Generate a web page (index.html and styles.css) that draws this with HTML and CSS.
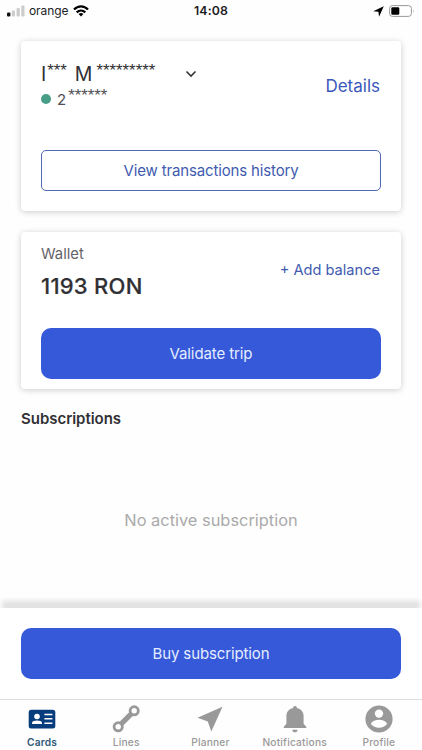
FILE: index.html
```html
<!DOCTYPE html>
<html lang="en">
<head>
<meta charset="utf-8">
<meta name="viewport" content="width=device-width, initial-scale=1">
<title>Cards</title>
<link rel="stylesheet" href="styles.css">
</head>
<body>
<div class="app">
  <header class="status">
    <div class="carrier">
      <svg class="signal" width="18" height="12" viewBox="0 0 18 12"><rect x="0" y="7.5" width="3.4" height="4" rx="1" fill="#111"/><g fill="#ccc"><rect x="4.8" y="5.5" width="3.2" height="6" rx="1"/><rect x="9.6" y="3" width="3.2" height="8.5" rx="1"/><rect x="14.3" y="0.5" width="3.2" height="11" rx="1"/></g></svg>
      <span class="operator">orange</span>
      <svg width="16" height="12" viewBox="0 0 16 12"><g fill="none" stroke="#000" stroke-width="2.2"><path d="M1 4.6C5 .3 11 .3 15 4.6"/><path d="M3.7 7.4C6.2 4.9 9.8 4.9 12.3 7.4"/></g><path d="M5.6 9C7 7.7 9 7.7 10.4 9L8 11.5Z"/></svg>
    </div>
    <time class="clock">14:08</time>
    <div class="power">
      <svg width="10" height="10" viewBox="0 0 10 10"><path d="M9.8.2L5.5 9.8L4.9 5.3L.2 4.7Z"/></svg>
      <svg width="26" height="12" viewBox="0 0 26 12"><rect x=".6" y=".6" width="21.8" height="10.8" rx="2.8" fill="none" stroke="#999" stroke-width="1"/><rect x="2.3" y="2.3" width="8" height="7.4" rx="1.3"/><path d="M24 4.2q1.2 1.8 0 3.6z" fill="#999"/></svg>
    </div>
  </header>

  <main class="content">
    <section class="card account">
      <div class="account-top">
        <div class="owner">
          <div class="name"><span>I</span><span class="mask">***</span><span class="surname">M</span><span class="mask mask-long">*********</span>
            <svg class="chevron" width="12" height="8" viewBox="0 0 12 8"><path d="M1.5 1.5L6 6L10.5 1.5" fill="none" stroke="#333" stroke-width="1.6"/></svg>
          </div>
          <div class="number"><i class="dot"></i><span>2</span><span class="mask">******</span></div>
        </div>
        <a class="details">Details</a>
      </div>
      <button class="btn outline"><span class="history">View transactions history</span></button>
    </section>

    <section class="card wallet">
      <div class="wallet-top">
        <div>
          <div class="label">Wallet</div>
          <div class="amount">1193 RON</div>
        </div>
        <a class="add">+ Add balance</a>
      </div>
      <button class="btn solid"><span class="validate">Validate trip</span></button>
    </section>

    <h2 class="heading">Subscriptions</h2>
    <p class="empty">No active subscription</p>
  </main>

  <div class="shade"></div>
  <div class="buy"><button class="btn solid"><span class="purchase">Buy subscription</span></button></div>

  <nav class="tabs">
    <a class="tab active">
      <svg width="28" height="28" viewBox="0 0 28 28"><rect x=".7" y="4.8" width="26.6" height="18.6" rx="2.5" fill="#073d7c"/><g fill="#fff"><circle cx="9" cy="11.5" r="2.8"/><path d="M4 19v-1.2c0-3.2 10-3.2 10 0V19z"/><path d="M16.4 8.7h8v1.5h-8zM16.4 13h8v1.5h-8zM16.4 17.5h8V19h-8z"/></g></svg>
      <span>Cards</span>
    </a>
    <a class="tab lines">
      <svg width="28" height="28" viewBox="0 0 28 28"><g fill="none" stroke="#999" stroke-width="2.8"><circle cx="6.2" cy="21.8" r="4.1"/><circle cx="22.2" cy="5.8" r="4.1"/></g><path d="M9.2 18.8L19.2 8.8" stroke="#999" stroke-width="5.2"/></svg>
      <span>Lines</span>
    </a>
    <a class="tab planner">
      <svg width="28" height="28" viewBox="0 0 28 28"><path d="M26.5 1.7L15.3 26.5L11.8 16.6L1.5 12.8Z" fill="#999"/></svg>
      <span>Planner</span>
    </a>
    <a class="tab notifications">
      <svg width="28" height="28" viewBox="0 0 28 28"><path d="M12.2 2.2a1.9 1.9 0 0 1 3.6 0v.9c4.6.9 6.8 4.1 6.8 8v7.7l2.7 3V23H2.8v-1.2l2.6-3v-7.7c0-3.9 2.2-7.1 6.8-8zM11.3 24.7h5.2c0 3.5-5.2 3.5-5.2 0z" fill="#999"/></svg>
      <span>Notifications</span>
    </a>
    <a class="tab profile">
      <svg width="28" height="28" viewBox="0 0 28 28"><circle cx="14" cy="14" r="13.6" fill="#999"/><circle cx="14" cy="8.6" r="4.2" fill="#fff"/><path d="M5.8 18.7c2.7-5.4 13.7-5.4 16.4 0c-3.8 5.4-12.6 5.4-16.4 0z" fill="#fff"/></svg>
      <span>Profile</span>
    </a>
  </nav>
</div>
</body>
</html>
```
FILE: styles.css
```css
* { box-sizing: border-box; }
body { margin: 0; background: #fefefe; font-family: Inter, "Liberation Sans", sans-serif; color: #303034; }
svg { display: block; flex: none; }
.app { width: 422px; height: 750px; display: flex; flex-direction: column; overflow: hidden; }
.status { height: 22px; flex: none; display: grid; grid-template-columns: 1fr auto 1fr; align-items: center; padding: 0 7px; color: #1c1c1e; }
.carrier { display: flex; align-items: center; gap: 4px; }
.operator { font-size: 12px; line-height: 18px; width: 40px; white-space: nowrap; letter-spacing: -.1px; }
.clock { font-size: 12.3px; line-height: 18px; font-weight: 600; letter-spacing: .15px; }
.power { display: flex; justify-content: flex-end; align-items: center; gap: 5px; }
.power svg:first-child { width: 11px; height: 11px; }
.content { flex: 1; padding: 19px 21px 0; }
.card { background: #fff; border-radius: 4px; box-shadow: 0 1px 6px rgba(0, 0, 0, .2); padding: 0 20px; }
.account { height: 170px; padding-top: 20px; }
.account-top { display: flex; justify-content: space-between; height: 89px; }
.name { display: flex; align-items: center; height: 26px; font-size: 19.5px; line-height: 26px; }
.name, .number { white-space: nowrap; }
.mask { font: 16.8px/20px "Liberation Sans", sans-serif; margin: 0 0 7px 1px; }
.surname { margin-left: 8px; }
.mask-long { margin-left: 4px; }
.chevron { margin-left: 30px; }
.number { display: flex; align-items: center; height: 25px; font-size: 15px; color: #505055; }
.number .mask { margin-bottom: 7px; margin-left: 2px; }
.dot { width: 10px; height: 10px; border-radius: 50%; background: #479d87; margin: 0 6px 1px 0; }
.details { color: #3a58bb; font-size: 17px; line-height: 24px; margin: 13px 1px 0 0; }
.btn { display: flex; width: 100%; align-items: center; justify-content: center; font-family: inherit; font-size: 15px; padding: 0; white-space: nowrap; }
.history { letter-spacing: -.15px; }
.validate { letter-spacing: -.1px; }
.purchase { letter-spacing: -.12px; }
.outline { height: 41px; border: 1px solid #5269b5; border-radius: 5px; background: #fff; color: #415baf; }
.wallet { height: 157px; margin-top: 21px; padding-top: 11px; }
.wallet-top { display: flex; justify-content: space-between; height: 85px; }
.label { font-size: 14.8px; line-height: 22px; color: #646469; }
.amount { font-size: 22px; line-height: 30px; font-weight: 500; margin-top: 6px; letter-spacing: .25px; -webkit-text-stroke: .2px #303034; }
.add { color: #415baf; font-size: 14.6px; line-height: 22px; margin: 16px 1px 0 0; }
.solid { height: 51px; border: 0; border-radius: 10px; background: #3559d9; color: #e6edff; }
.heading { font-size: 15px; line-height: 22px; font-weight: 600; margin: 19px 0 0; letter-spacing: -.03px; }
.empty { color: #aaa; font-size: 16.4px; line-height: 24px; text-align: center; margin: 78px 0 0; }
.shade { height: 11px; flex: none; background: linear-gradient(#fefefe, #e4e4e4 60%, #e2e2e2); box-shadow: inset 5px 0 4px -3px #fefefe, inset -5px 0 4px -3px #fefefe; }
.buy { flex: none; height: 91px; padding: 20px 21px; background: #fff; }
.tabs { flex: none; height: 51px; border-top: 1px solid #ddd; display: grid; grid-template-columns: repeat(5, 84.2px); }
.tab { display: flex; flex-direction: column; align-items: center; padding-top: 5px; color: #999; font-size: 10.2px; line-height: 16px; font-weight: 500; letter-spacing: .2px; }
.tab span { margin-top: 1px; }
.active { color: #315879; font-weight: 600; }
```
